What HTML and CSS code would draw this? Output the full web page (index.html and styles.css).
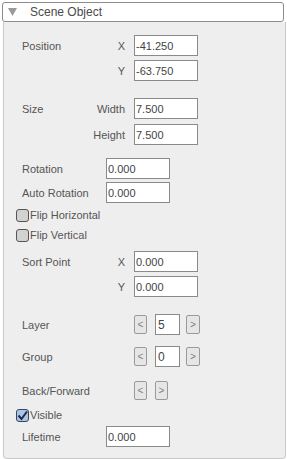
FILE: index.html
```html
<!DOCTYPE html>
<html lang="en">

<head>
    <meta charset="UTF-8">
    <meta name="viewport" content="width=device-width, initial-scale=1.0">
    <title>Scene Object</title>
    <link rel="stylesheet" href="styles.css">
</head>

<body>
    <div class="inspector">
        <div class="panel-header">
            <svg class="arrow" width="9" height="8" viewBox="0 0 9 8"><polygon points="0,0 9,0 4.5,8" fill="#9a9a9a"/></svg>
            <span>Scene Object</span>
        </div>

        <div class="panel-body">
            <div class="row first">
                <span class="label">Position</span>
                <span class="sublabel">X</span>
                <input class="field" type="text" value="-41.250">
            </div>
            <div class="row gap-4">
                <span class="label"></span>
                <span class="sublabel">Y</span>
                <input class="field" type="text" value="-63.750">
            </div>

            <div class="row gap-17">
                <span class="label">Size</span>
                <span class="sublabel">Width</span>
                <input class="field" type="text" value="7.500">
            </div>
            <div class="row gap-5">
                <span class="label"></span>
                <span class="sublabel">Height</span>
                <input class="field" type="text" value="7.500">
            </div>

            <div class="row gap-13">
                <span class="label wide">Rotation</span>
                <input class="field" type="text" value="0.000">
            </div>
            <div class="row gap-3">
                <span class="label wide">Auto Rotation</span>
                <input class="field" type="text" value="0.000">
            </div>

            <label class="check gap-2">
                <span class="box"></span>Flip Horizontal
            </label>
            <label class="check">
                <span class="box"></span>Flip Vertical
            </label>

            <div class="row gap-6">
                <span class="label">Sort Point</span>
                <span class="sublabel">X</span>
                <input class="field" type="text" value="0.000">
            </div>
            <div class="row gap-4">
                <span class="label"></span>
                <span class="sublabel">Y</span>
                <input class="field" type="text" value="0.000">
            </div>

            <div class="row gap-17">
                <span class="label stepper-label">Layer</span>
                <button class="step">&lt;</button>
                <input class="field small" type="text" value="5">
                <button class="step right">&gt;</button>
            </div>
            <div class="row gap-11">
                <span class="label stepper-label">Group</span>
                <button class="step">&lt;</button>
                <input class="field small" type="text" value="0">
                <button class="step right">&gt;</button>
            </div>
            <div class="row gap-13">
                <span class="label stepper-label">Back/Forward</span>
                <button class="step">&lt;</button>
                <button class="step">&gt;</button>
            </div>

            <label class="check gap-4">
                <span class="box checked">
                    <svg width="11" height="11" viewBox="0 0 11 11"><polyline points="1.5,5.5 4.5,9 10,1.5" fill="none" stroke="#1f2a44" stroke-width="2"/></svg>
                </span>Visible
            </label>

            <div class="row gap-1">
                <span class="label wide">Lifetime</span>
                <input class="field" type="text" value="0.000">
            </div>
        </div>
    </div>
</body>
</html>
```

FILE: styles.css
```css
body, html {
    margin: 0;
    padding: 0;
    width: 100%;
    height: 100%;
    overflow: hidden;
    background: #ffffff;
    font-family: "Liberation Sans", Arial, sans-serif;
    font-size: 11px;
    color: #555555;
}

.inspector {
    padding: 2px 1px 0 2px;
}

.panel-header {
    height: 20px;
    margin-right: 2px;
    box-sizing: border-box;
    border: 1px solid #8c8c8c;
    border-radius: 3px;
    background: #ffffff;
    display: flex;
    align-items: center;
    font-size: 12px;
    color: #4a4a4a;
}

.panel-header .arrow {
    margin-left: 5px;
    margin-right: 13px;
}

.panel-body {
    margin-left: 1px;
    height: 437px;
    box-sizing: border-box;
    border: 1px solid #c9c9c9;
    border-top: none;
    border-radius: 0 0 4px 4px;
    background: #eeeeee;
    padding: 13px 0 0 18px;
    display: flex;
    flex-direction: column;
}

.row {
    display: flex;
    align-items: center;
    height: 21px;
}

.label {
    width: 70px;
    flex-shrink: 0;
}

.label.wide {
    width: 84px;
}

.label.stepper-label {
    width: 112px;
}

.sublabel {
    width: 33px;
    text-align: right;
    margin-right: 9px;
}

.field {
    width: 64px;
    height: 21px;
    box-sizing: border-box;
    border: 1px solid #8a8a8a;
    background: #ffffff;
    padding: 0 0 0 1px;
    margin: 0;
    font-family: "Liberation Sans", Arial, sans-serif;
    font-size: 11px;
    color: #444444;
    outline: none;
}

.field.small {
    width: 25px;
    padding-left: 2px;
    font-size: 12px;
}

.step {
    width: 13px;
    height: 19px;
    box-sizing: border-box;
    border: 1px solid #9a9a9a;
    border-radius: 2px;
    background: #e6e6e6;
    padding: 0;
    margin: 0 8px 0 0;
    font-family: "Liberation Sans", Arial, sans-serif;
    font-size: 10px;
    color: #808080;
}

.step.right {
    width: 14px;
    margin: 0 0 0 6px;
}

.check {
    display: flex;
    align-items: center;
    height: 20px;
    margin-left: -6px;
    font-size: 11px;
}

.box {
    width: 13px;
    height: 13px;
    box-sizing: border-box;
    border: 1px solid #555;
    border-radius: 3px;
    background: #d2d2d2;
    margin-right: 1px;
    display: flex;
    align-items: center;
    justify-content: center;
}

.box.checked {
    background: #aac6e6;
    border-color: #3a4660;
}

.first { margin-top: 0; }
.gap-1 { margin-top: 1px; }
.gap-2 { margin-top: 2px; }
.gap-3 { margin-top: 3px; }
.gap-4 { margin-top: 4px; }
.gap-5 { margin-top: 5px; }
.gap-6 { margin-top: 6px; }
.gap-11 { margin-top: 11px; }
.gap-13 { margin-top: 13px; }
.gap-17 { margin-top: 17px; }
```
